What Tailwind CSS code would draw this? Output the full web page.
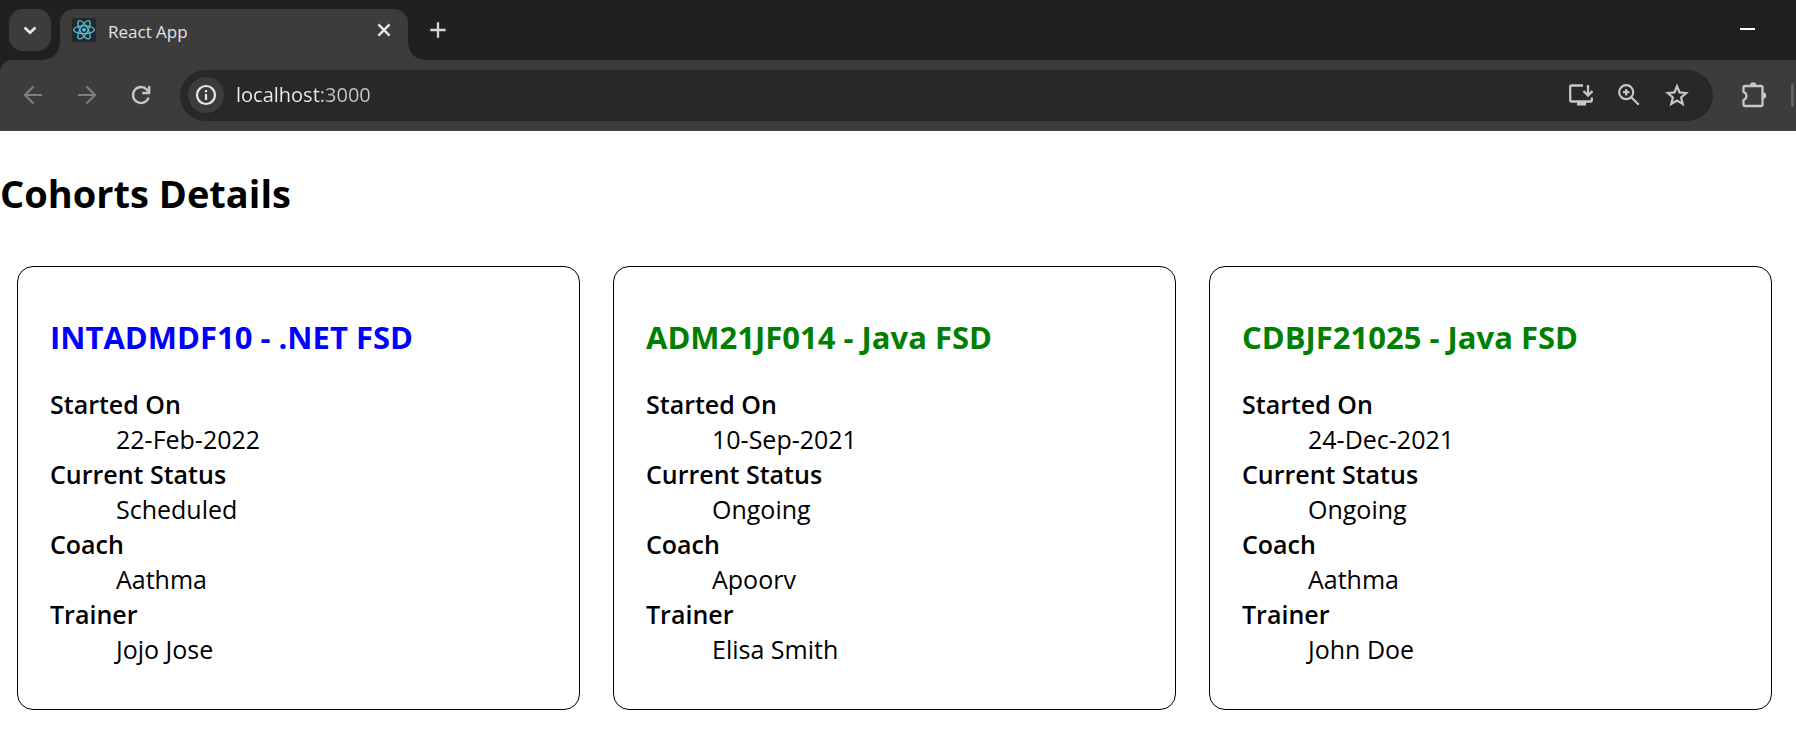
<!DOCTYPE html>
<html lang="en">
<head>
<meta charset="utf-8">
<title>React App</title>
<script src="https://cdn.jsdelivr.net/npm/@tailwindcss/browser@4"></script>
</head>
<body class="min-h-screen bg-white font-['Open_Sans','Noto_Sans',sans-serif] text-black">
<header class="bg-[#1f2120]">
  <div class="flex h-[60px] items-start pt-[9px] pl-[9px]">
    <button aria-label="Search tabs" class="grid size-[42px] place-items-center rounded-[14px] bg-[#3c3c3c]">
      <svg class="size-6" viewBox="0 0 24 24" fill="none" stroke="#e8e8e8" stroke-width="2.6"><path d="M6.5 9.5l5.5 5.2 5.5-5.2"/></svg>
    </button>
    <div class="relative ml-[9px] flex h-[51px] w-[348px] items-start rounded-t-[14px] bg-[#3c3c3c] pt-[9px] pr-3 pl-3">
      <span class="absolute bottom-0 -left-4 size-4 bg-[radial-gradient(circle_at_0_0,transparent_15px,#3c3c3c_16px)]"></span>
      <span class="absolute -right-4 bottom-0 size-4 bg-[radial-gradient(circle_at_100%_0,transparent_15px,#3c3c3c_16px)]"></span>
      <svg class="size-6" viewBox="0 0 24 24" fill="none" stroke="#58c4dc" stroke-width="1.2">
        <rect width="24" height="24" rx="2.5" fill="#23272b" stroke="none"/>
        <ellipse cx="12" cy="11.8" rx="10.3" ry="3.9"/>
        <ellipse cx="12" cy="11.8" rx="10.3" ry="3.9" transform="rotate(60 12 11.8)"/>
        <ellipse cx="12" cy="11.8" rx="10.3" ry="3.9" transform="rotate(120 12 11.8)"/>
        <circle cx="12" cy="11.8" r="1.9" fill="#58c4dc" stroke="none"/>
      </svg>
      <span class="ml-3 flex-1 text-[17px] leading-7 text-[#e3e3e3]">React App</span>
      <button aria-label="Close tab" class="grid size-6 place-items-center">
        <svg class="size-6" viewBox="0 0 24 24" stroke="#e8e8e8" stroke-width="2.4"><path d="M6.400 6.400l11.200 11.200M17.600 6.400L6.400 17.600"/></svg>
      </button>
    </div>
    <button aria-label="New tab" class="mt-[9px] ml-[18px] grid size-6 place-items-center">
      <svg class="size-6" viewBox="0 0 24 24" stroke="#d8d8d8" stroke-width="2.300"><path d="M12 4.300v15.400M4.300 12h15.400"/></svg>
    </button>
    <button aria-label="Minimize" class="mt-2 mr-[36px] ml-auto grid size-6 place-items-center">
      <svg class="size-6" viewBox="0 0 24 24"><path fill="#fff" d="M4 11h15v2H4z"/></svg>
    </button>
  </div>
  <div class="flex h-[71px] items-center rounded-tl-[12px] border-b border-[#484848] bg-[#3c3c3c] pr-[2px] pl-[21px]">
    <button aria-label="Back" class="size-6">
      <svg class="size-6" viewBox="0 0 24 24" fill="none" stroke="#7e7e7e" stroke-width="2.200"><path d="M21 12H4.500M12.500 3.500L4 12l8.500 8.500"/></svg>
    </button>
    <button aria-label="Forward" class="ml-[30px] size-6">
      <svg class="size-6" viewBox="0 0 24 24" fill="none" stroke="#7e7e7e" stroke-width="2.200"><path d="M3 12h16.500M11.500 3.500L20 12l-8.500 8.500"/></svg>
    </button>
    <button aria-label="Reload" class="ml-[30px] size-6">
      <svg class="size-6" viewBox="0 0 24 24" fill="none" stroke="#c7c7c7" stroke-width="2.300"><path d="M19.600 14.500A8 8 0 1 1 17.900 6.600L20 8.800M20.200 3v7h-7"/></svg>
    </button>
    <div class="ml-[27px] flex h-[51px] flex-1 items-center rounded-full bg-[#282828] pr-6 pl-2">
      <button aria-label="View site information" class="grid size-9 place-items-center rounded-full bg-[#3c3c3c]">
        <svg class="size-6" viewBox="0 0 24 24" fill="none" stroke="#e8e8e8" stroke-width="2.200"><circle cx="12" cy="12" r="9"/><path d="M12 11v6M12 7v2.200"/></svg>
      </button>
      <input aria-label="Address" value="localhost:3000" class="ml-3 w-0 flex-1 bg-[linear-gradient(90deg,#f0f0f0_84px,#c7c7c7_84px)] bg-clip-text text-[20px] leading-7 text-transparent outline-none">
      <div class="flex items-center gap-6">
        <button aria-label="Install app" class="size-6">
          <svg class="size-6" viewBox="0 0 24 24" fill="none" stroke="#c7c7c7" stroke-width="2.300"><path d="M14 2.500H2.500Q1.200 2.500 1.200 4v13q0 1.500 1.300 1.500h19q1.300 0 1.300-1.500V14.500"/><path d="M19 2v10M14.500 8l4.500 4.500L23.500 8"/><path d="M8 18.500h9v4H8z" fill="#c7c7c7" stroke="none"/></svg>
        </button>
        <button aria-label="Zoom" class="size-6">
          <svg class="size-6" viewBox="0 0 24 24" fill="none" stroke="#c7c7c7" stroke-width="2.200"><circle cx="9.200" cy="9.200" r="7"/><path d="M14.200 14.200l7.600 7.600M9.200 6v6.400M6 9.200h6.400"/></svg>
        </button>
        <button aria-label="Bookmark this tab" class="size-6">
          <svg class="size-6" viewBox="0 0 24 24" fill="none" stroke="#c7c7c7" stroke-width="2.200"><path d="M12 3.200l2.500 6.200 6.700.6-5.100 4.400 1.600 6.600-5.700-3.500L6.300 21l1.600-6.600L2.800 10l6.700-.6z"/></svg>
        </button>
      </div>
    </div>
    <button aria-label="Extensions" class="ml-7 h-7 w-[26px]">
      <svg class="h-7 w-[26px]" viewBox="0 0 26 28" fill="none" stroke="#c7c7c7" stroke-width="2.300"><path d="M4 5h16q1.500 0 1.500 1.500v17q0 1.500-1.500 1.500H4q-1.500 0-1.500-1.500V19a4.200 4.200 0 0 0 0-8V6.500Q2.500 5 4 5z"/><path fill="#c7c7c7" stroke="none" d="M9 4.500a3.200 3.200 0 0 1 6.400 0zM22 11.200a3.200 3.200 0 0 1 0 6.400z"/></svg>
    </button>
    <span class="ml-6 h-6 w-[3px] rounded-full bg-[#5f5f5f]"></span>
  </div>
</header>
<main>
  <h1 class="mt-[34px] mb-[45px] text-[38px] leading-[56px] font-bold">Cohorts Details</h1>
  <div class="grid grid-cols-3 gap-[33px] pr-6 pb-[31px] pl-[17px] text-[25px] leading-[35px]">
    <section class="rounded-2xl border border-black px-8 pt-12 pb-[42px]">
      <h2 class="mb-7 text-[31px] leading-[44px] font-bold text-[#0000ff]">INTADMDF10 - .NET FSD</h2>
      <dl>
        <dt class="font-semibold">Started On</dt><dd class="pl-[66px]">22-Feb-2022</dd>
        <dt class="font-semibold">Current Status</dt><dd class="pl-[66px]">Scheduled</dd>
        <dt class="font-semibold">Coach</dt><dd class="pl-[66px]">Aathma</dd>
        <dt class="font-semibold">Trainer</dt><dd class="pl-[66px]">Jojo Jose</dd>
      </dl>
    </section>
    <section class="rounded-2xl border border-black px-8 pt-12 pb-[42px]">
      <h2 class="mb-7 text-[31px] leading-[44px] font-bold text-[#008000]">ADM21JF014 - Java FSD</h2>
      <dl>
        <dt class="font-semibold">Started On</dt><dd class="pl-[66px]">10-Sep-2021</dd>
        <dt class="font-semibold">Current Status</dt><dd class="pl-[66px]">Ongoing</dd>
        <dt class="font-semibold">Coach</dt><dd class="pl-[66px]">Apoorv</dd>
        <dt class="font-semibold">Trainer</dt><dd class="pl-[66px]">Elisa Smith</dd>
      </dl>
    </section>
    <section class="rounded-2xl border border-black px-8 pt-12 pb-[42px]">
      <h2 class="mb-7 text-[31px] leading-[44px] font-bold text-[#008000]">CDBJF21025 - Java FSD</h2>
      <dl>
        <dt class="font-semibold">Started On</dt><dd class="pl-[66px]">24-Dec-2021</dd>
        <dt class="font-semibold">Current Status</dt><dd class="pl-[66px]">Ongoing</dd>
        <dt class="font-semibold">Coach</dt><dd class="pl-[66px]">Aathma</dd>
        <dt class="font-semibold">Trainer</dt><dd class="pl-[66px]">John Doe</dd>
      </dl>
    </section>
  </div>
</main>
</body>
</html>
